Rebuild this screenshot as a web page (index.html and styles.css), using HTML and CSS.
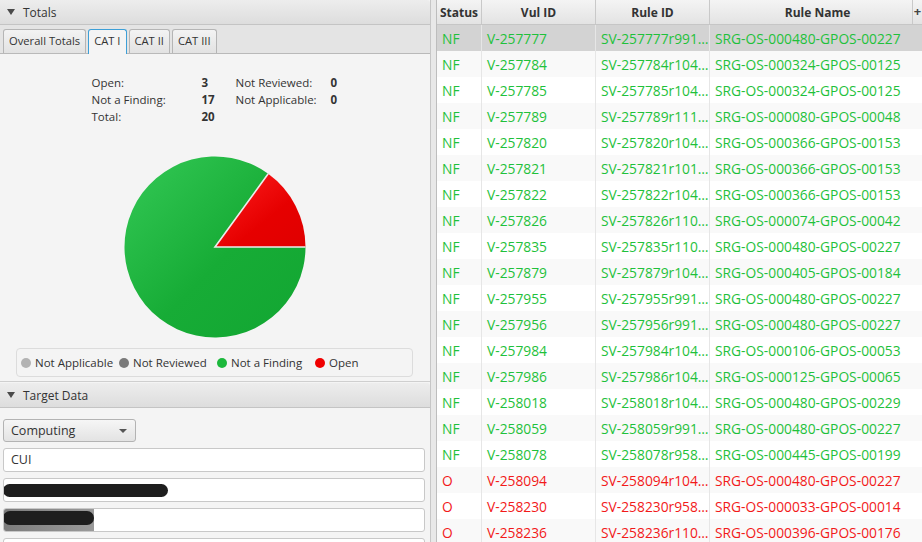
FILE: index.html
```html
<!DOCTYPE html>
<html>
<head>
<meta charset="utf-8">
<link rel="stylesheet" href="styles.css">
</head>
<body>
<div class="app">
  <div class="left">
    <section class="totals">
      <div class="pane-head"><span class="caret"></span>Totals</div>
      <div class="tabs">
        <div class="tab">Overall Totals</div>
        <div class="tab active">CAT I</div>
        <div class="tab">CAT II</div>
        <div class="tab">CAT III</div>
      </div>
      <div class="tab-body">
        <div class="stats">
          <span>Open:</span><b>3</b><span>Not Reviewed:</span><b>0</b>
          <span>Not a Finding:</span><b>17</b><span>Not Applicable:</span><b>0</b>
          <span>Total:</span><b>20</b><span></span><span></span>
        </div>
        <svg class="pie" width="184" height="184" viewBox="0 0 184 184">
          <defs>
            <linearGradient id="g" x1="0" y1="0" x2="1" y2="1">
              <stop offset="0" stop-color="#34c956"/>
              <stop offset="0.55" stop-color="#17ac36"/>
              <stop offset="1" stop-color="#12a632"/>
            </linearGradient>
            <linearGradient id="r" x1="0" y1="0" x2="1" y2="1">
              <stop offset="0" stop-color="#ff2020"/>
              <stop offset="0.6" stop-color="#e60000"/>
              <stop offset="1" stop-color="#e00000"/>
            </linearGradient>
          </defs>
          <path d="M92,92 L145.19,18.79 A90.5,90.5 0 1 0 182.5,92 Z" fill="url(#g)"/>
          <path d="M92,92 L182.5,92 A90.5,90.5 0 0 0 145.19,18.79 Z" fill="url(#r)"/>
          <path d="M145.19,18.79 L92,92 L182.5,92" fill="none" stroke="#ececec" stroke-width="1.6"/>
        </svg>
        <div class="legend">
          <span class="item"><i class="dot na"></i>Not Applicable</span>
          <span class="item"><i class="dot nr"></i>Not Reviewed</span>
          <span class="item"><i class="dot nf"></i>Not a Finding</span>
          <span class="item"><i class="dot op"></i>Open</span>
        </div>
      </div>
    </section>
    <section class="target">
      <div class="pane-head"><span class="caret"></span>Target Data</div>
      <div class="target-body">
        <div class="combo"><span>Computing</span><span class="arrow"></span></div>
        <div class="field">CUI</div>
        <div class="field"><span class="redact r1"></span></div>
        <div class="field"><span class="redact-bg"><span class="redact r2"></span></span></div>
        <div class="field"></div>
      </div>
    </section>
  </div>
  <div class="divider"></div>
  <div class="grid">
    <div class="row head">
      <div>Status</div><div>Vul ID</div><div>Rule ID</div><div>Rule Name</div>
      <span class="plus">+</span>
    </div>
    <div class="row nf sel"><div>NF</div><div>V-257777</div><div>SV-257777r991…</div><div>SRG-OS-000480-GPOS-00227</div></div>
    <div class="row nf"><div>NF</div><div>V-257784</div><div>SV-257784r104…</div><div>SRG-OS-000324-GPOS-00125</div></div>
    <div class="row nf"><div>NF</div><div>V-257785</div><div>SV-257785r104…</div><div>SRG-OS-000324-GPOS-00125</div></div>
    <div class="row nf"><div>NF</div><div>V-257789</div><div>SV-257789r111…</div><div>SRG-OS-000080-GPOS-00048</div></div>
    <div class="row nf"><div>NF</div><div>V-257820</div><div>SV-257820r104…</div><div>SRG-OS-000366-GPOS-00153</div></div>
    <div class="row nf"><div>NF</div><div>V-257821</div><div>SV-257821r101…</div><div>SRG-OS-000366-GPOS-00153</div></div>
    <div class="row nf"><div>NF</div><div>V-257822</div><div>SV-257822r104…</div><div>SRG-OS-000366-GPOS-00153</div></div>
    <div class="row nf"><div>NF</div><div>V-257826</div><div>SV-257826r110…</div><div>SRG-OS-000074-GPOS-00042</div></div>
    <div class="row nf"><div>NF</div><div>V-257835</div><div>SV-257835r110…</div><div>SRG-OS-000480-GPOS-00227</div></div>
    <div class="row nf"><div>NF</div><div>V-257879</div><div>SV-257879r104…</div><div>SRG-OS-000405-GPOS-00184</div></div>
    <div class="row nf"><div>NF</div><div>V-257955</div><div>SV-257955r991…</div><div>SRG-OS-000480-GPOS-00227</div></div>
    <div class="row nf"><div>NF</div><div>V-257956</div><div>SV-257956r991…</div><div>SRG-OS-000480-GPOS-00227</div></div>
    <div class="row nf"><div>NF</div><div>V-257984</div><div>SV-257984r104…</div><div>SRG-OS-000106-GPOS-00053</div></div>
    <div class="row nf"><div>NF</div><div>V-257986</div><div>SV-257986r104…</div><div>SRG-OS-000125-GPOS-00065</div></div>
    <div class="row nf"><div>NF</div><div>V-258018</div><div>SV-258018r104…</div><div>SRG-OS-000480-GPOS-00229</div></div>
    <div class="row nf"><div>NF</div><div>V-258059</div><div>SV-258059r991…</div><div>SRG-OS-000480-GPOS-00227</div></div>
    <div class="row nf"><div>NF</div><div>V-258078</div><div>SV-258078r958…</div><div>SRG-OS-000445-GPOS-00199</div></div>
    <div class="row o"><div>O</div><div>V-258094</div><div>SV-258094r104…</div><div>SRG-OS-000480-GPOS-00227</div></div>
    <div class="row o"><div>O</div><div>V-258230</div><div>SV-258230r958…</div><div>SRG-OS-000033-GPOS-00014</div></div>
    <div class="row o"><div>O</div><div>V-258236</div><div>SV-258236r110…</div><div>SRG-OS-000396-GPOS-00176</div></div>
  </div>
</div>
</body>
</html>
```
FILE: styles.css
```css
* { box-sizing: border-box; }
html, body { margin: 0; padding: 0; }
body {
  width: 922px;
  height: 542px;
  overflow: hidden;
  font-family: "Open Sans", "Noto Sans", sans-serif;
  font-size: 11.5px;
  color: #333;
  background: #f4f4f4;
}
.app { display: flex; height: 542px; }

.left {
  width: 431px;
  flex: none;
  display: flex;
  flex-direction: column;
  border-right: 1px solid #c6c6c6;
  background: #f4f4f4;
  overflow: hidden;
}
.divider {
  width: 6px;
  flex: none;
  background: #e8e8e8;
  border-right: 1px solid #bdbdbd;
}
.grid { flex: 1; background: #fff; overflow: hidden; }

.pane-head {
  height: 25px;
  display: flex;
  align-items: center;
  gap: 8px;
  padding-left: 7px;
  background: linear-gradient(#ededed, #dddddd);
  border-bottom: 1px solid #c4c4c4;
  border-top-right-radius: 3px;
  color: #333;
  font-size: 12px;
}
.caret {
  width: 0; height: 0;
  border-left: 4px solid transparent;
  border-right: 4px solid transparent;
  border-top: 6px solid #4a4a4a;
}

.tabs {
  height: 29px;
  display: flex;
  align-items: flex-end;
  gap: 2px;
  padding-left: 3px;
  background: #e4e4e4;
  border-bottom: 1px solid #b9b9b9;
}
.tab {
  height: 24px;
  line-height: 22px;
  padding: 0 5px;
  border: 1px solid #b5b5b5;
  border-bottom: none;
  border-radius: 3px 3px 0 0;
  background: linear-gradient(#f3f3f3, #e2e2e2);
  font-size: 11.2px;
}
.tab.active {
  height: 25px;
  margin-bottom: -1px;
  background: #f4f4f4;
  border-color: #3d9fd7;
}

.tab-body {
  height: 327px;
  display: flex;
  flex-direction: column;
  align-items: center;
}
.stats {
  display: grid;
  grid-template-columns: 110px 34px 95px 8px;
  line-height: 17px;
  padding-top: 20px;
}
.stats b { font-weight: 700; }
.pie { margin-top: 30px; display: block; }
.legend {
  align-self: stretch;
  height: 29px;
  margin: 9px 17px 0 16px;
  border: 1px solid #dcdcdc;
  border-radius: 4px;
  display: grid;
  grid-template-columns: repeat(4, 98px);
  align-items: center;
  padding-left: 4px;
}
.item { display: flex; align-items: center; white-space: nowrap; }
.dot { width: 10px; height: 10px; border-radius: 50%; margin-right: 4px; display: block; flex: none; }
.dot.na { background: #b3b3b3; }
.dot.nr { background: #7a7a7a; }
.dot.nf { background: #1cb83c; }
.dot.op { background: #f00000; }

.target {
  flex: 1;
  border-top: 1px solid #cfcfcf;
  padding-top: 1px;
}
.target-body {
  display: flex;
  flex-direction: column;
  gap: 6px;
  padding: 11px 5px 0 3px;
}
.combo {
  width: 133px;
  height: 23px;
  border: 1px solid #b3b3b3;
  border-radius: 3px;
  background: linear-gradient(#f6f6f6, #e3e3e3);
  display: flex;
  align-items: center;
  justify-content: space-between;
  padding: 0 8px 0 7px;
  font-size: 12.5px;
}
.arrow {
  width: 0; height: 0;
  border-left: 4px solid transparent;
  border-right: 4px solid transparent;
  border-top: 4px solid #555;
}
.field {
  height: 24px;
  border: 1px solid #c8c8c8;
  border-radius: 3px;
  background: #fff;
  padding-left: 7px;
  line-height: 22px;
  font-size: 12.5px;
  overflow: hidden;
}
.field:has(.redact) { padding-left: 0; }
.redact { display: block; background: #1e1e1e; border-radius: 7px; }
.r1 { width: 165px; height: 13px; margin-top: 5px; margin-left: -1px; }
.redact-bg {
  display: block;
  width: 91px;
  height: 24px;
  margin: -1px 0 0 -1px;
  background: linear-gradient(90deg, #7c7c7c, #9a9a9a);
  padding-top: 3px;
}
.r2 { width: 91px; height: 14px; }

.row {
  display: grid;
  grid-template-columns: 45px 114px 114px 216px;
  height: 26px;
  font-size: 13.8px;
}
.row > div {
  display: flex;
  align-items: center;
  padding-left: 5px;
  border-right: 1px solid #e6e6e6;
  white-space: nowrap;
  overflow: hidden;
}
.row:nth-child(odd) { background: #f9f9f9; }
.row.sel { background: #d3d3d3; }
.row.nf { color: #1fc13b; }
.row.o { color: #f21a1a; }
.row.head {
  position: relative;
  height: 25px;
  background: linear-gradient(#f4f4f4, #e3e3e3);
  border-bottom: 1px solid #c6c6c6;
  font-weight: 700;
  font-size: 12px;
  color: #333;
}
.row.head > div {
  justify-content: center;
  padding-left: 0;
  border-right: 1px solid #c9c9c9;
}
.plus {
  position: absolute;
  left: 475px;
  top: 0;
  width: 10px;
  height: 24px;
  line-height: 22px;
  text-align: center;
  background: linear-gradient(#f4f4f4, #e3e3e3);
  border-left: 1px solid #c9c9c9;
  font-size: 13px;
  font-weight: 700;
  color: #444;
}
```
